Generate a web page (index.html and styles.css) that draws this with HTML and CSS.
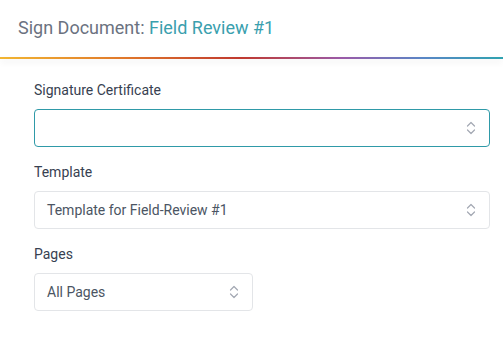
FILE: index.html
```html
<!DOCTYPE html>
<html lang="en">
<head>
  <meta charset="UTF-8" /><meta name="viewport" content="width=device-width, initial-scale=1"/>
  <title>Sign Document</title>
  <link rel="stylesheet" href="styles.css">
</head>
<body>
  <header class="top-bar">
    <h1 class="title">Sign Document: <span class="doc-name">Field Review #1</span></h1>
  </header>
  <div class="rule"></div>

  <main class="form">
    <div class="field">
      <label class="field-label">Signature Certificate</label>
      <div class="select focused">
        <span class="select-value"></span>
        <svg class="chevrons" width="10" height="14" viewBox="0 0 10 14">
          <path d="M1.5 5 L5 1.5 L8.5 5 M1.5 9 L5 12.5 L8.5 9" />
        </svg>
      </div>
    </div>

    <div class="field">
      <label class="field-label">Template</label>
      <div class="select">
        <span class="select-value">Template for Field-Review #1</span>
        <svg class="chevrons" width="10" height="14" viewBox="0 0 10 14">
          <path d="M1.5 5 L5 1.5 L8.5 5 M1.5 9 L5 12.5 L8.5 9" />
        </svg>
      </div>
    </div>

    <div class="field">
      <label class="field-label">Pages</label>
      <div class="select small">
        <span class="select-value">All Pages</span>
        <svg class="chevrons" width="10" height="14" viewBox="0 0 10 14">
          <path d="M1.5 5 L5 1.5 L8.5 5 M1.5 9 L5 12.5 L8.5 9" />
        </svg>
      </div>
    </div>
  </main>
</body>
</html>
```

FILE: styles.css
```css
* { box-sizing: border-box; margin: 0; padding: 0; }
body {
  font-family: Roboto, 'Liberation Sans', sans-serif;
  background: #fff;
  color: #374151;
}

/* Header with gradient rule */
.top-bar {
  height: 57px;
  padding: 0 18px 2px;
  display: flex;
  align-items: center;
}
.title {
  font-size: 18px;
  font-weight: 400;
  color: #6b7280;
}
.doc-name { color: #3aa0ae; }
.rule {
  height: 1.5px;
  background: linear-gradient(90deg, #f2b632, #e0772a 25%, #c0392f 48%, #9a5aa8 68%, #5a86c6 84%, #2fa3b0);
  box-shadow: 0 3px 6px rgba(0,0,0,0.09);
}

/* Form */
.form {
  padding: 23px 13px 0 34px;
  display: flex;
  flex-direction: column;
  gap: 17px;
}
.field-label {
  display: block;
  font-size: 14px;
  color: #374151;
  line-height: 16px;
  margin-bottom: 11px;
}
.select {
  height: 38px;
  border: 1px solid #e3e5e8;
  border-radius: 4px;
  display: flex;
  align-items: center;
  justify-content: space-between;
  padding: 0 13px 0 12px;
  font-size: 14px;
  color: #4b5563;
}
.select.focused { border-color: #2f9aa8; }
.select.small { width: 219px; }
.chevrons {
  fill: none;
  stroke: #a3a8b3;
  stroke-width: 1.2;
  stroke-linecap: round;
  stroke-linejoin: round;
}
```
